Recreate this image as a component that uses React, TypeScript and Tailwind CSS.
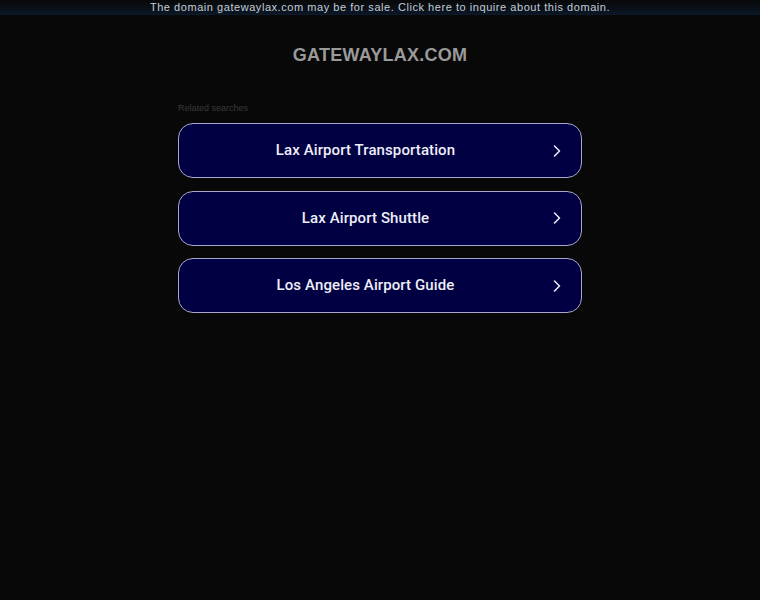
const searches = [
  "Lax Airport Transportation",
  "Lax Airport Shuttle",
  "Los Angeles Airport Guide",
];

function Chevron() {
  return (
    <svg width="10" height="14" viewBox="0 0 10 14" fill="none" aria-hidden>
      <path d="M2.5 2 L7.5 7 L2.5 12" stroke="#e8e8f4" strokeWidth="1.6" strokeLinecap="round" strokeLinejoin="round" />
    </svg>
  );
}

export default function App() {
  return (
    <div className="min-h-[600px] w-full bg-[#080808] font-['Liberation_Sans',Arial,sans-serif]">
      <div className="flex h-[15px] items-center justify-center border-b border-[#0c1a2c] bg-gradient-to-b from-[#080808] to-[#0b1626]">
        <p className="text-[11px] leading-none tracking-[0.55px] text-[#c4ccd4]">
          The domain gatewaylax.com may be for sale. Click here to inquire about this domain.
        </p>
      </div>

      <h1 className="mt-[29px] text-center text-[18px] font-bold leading-[22px] tracking-[0.25px] text-[#9a9a9a]">
        GATEWAYLAX.COM
      </h1>

      <div className="mx-auto mt-[36px] w-[404px]">
        <p className="text-[9px] leading-[12px] text-[#3a3a3a]">Related searches</p>
        <div className="mt-[9px] flex flex-col gap-[12.5px]">
          {searches.map((s) => (
            <a
              key={s}
              href="#"
              className="flex h-[55px] items-center rounded-[15px] border border-[#a8a8cc] bg-[#000042] pl-5 pr-[19px]"
            >
              <span className="flex-1 pr-[20px] text-center font-['Roboto',Arial,sans-serif] text-[15px] font-medium leading-none tracking-[0.1px] text-[#eeeef8]">
                {s}
              </span>
              <Chevron />
            </a>
          ))}
        </div>
      </div>
    </div>
  );
}
